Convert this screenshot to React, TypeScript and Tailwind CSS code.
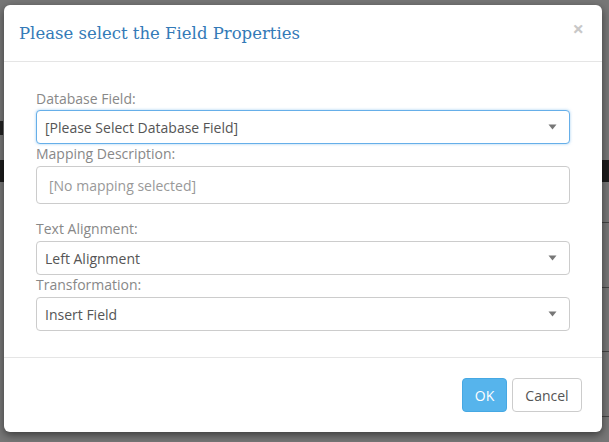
import React from "react";

function Caret() {
  return (
    <svg width="9" height="6" viewBox="0 0 9 6" className="shrink-0">
      <path d="M0.5 0.5 L8.5 0.5 L4.5 5.5 Z" fill="#777" />
    </svg>
  );
}

function SelectBox({ text, focused }: { text: string; focused?: boolean }) {
  return (
    <div
      className={
        "flex h-[34px] items-center justify-between rounded-[4px] border bg-white pl-[8px] pr-[12px] text-[14px] text-[#555] " +
        (focused
          ? "border-[#66afe9] shadow-[0_0_3px_rgba(102,175,233,0.6)]"
          : "border-[#ccc]")
      }
    >
      <span>{text}</span>
      <Caret />
    </div>
  );
}

function Label({ children }: { children: React.ReactNode }) {
  return <div className="h-[20px] leading-[20px] text-[14px] text-[#888]">{children}</div>;
}

export default function App() {
  return (
    <div
      className="relative h-[442px] w-[609px] overflow-hidden bg-[#777]"
      style={{ fontFamily: '"Open Sans", "Noto Sans", sans-serif' }}
    >
      {/* background page bits peeking out */}
      <div className="absolute left-0 top-[121px] h-[14px] w-[3px] bg-[#222]" />
      <div className="absolute left-0 top-[160px] h-[22px] w-[4px] bg-[#1c1c1c]" />
      <div className="absolute right-0 top-[160px] h-[22px] w-[8px] bg-[#1c1c1c]" />
      <div className="absolute right-0 top-[222px] h-px w-[8px] bg-[#444]" />
      <div className="absolute right-0 top-[287px] h-px w-[8px] bg-[#444]" />
      <div className="absolute right-0 top-[351px] h-px w-[8px] bg-[#444]" />
      <div className="absolute right-0 top-[416px] h-px w-[8px] bg-[#444]" />

      <div className="absolute left-[4px] top-[5px] flex h-[427px] w-[598px] flex-col rounded-[6px] bg-white shadow-[0_3px_9px_rgba(0,0,0,0.5)]">
        {/* header */}
        <div className="flex h-[57px] items-start justify-between border-b border-[#e5e5e5] pl-[15px] pr-[18px]">
          <div
            className="pt-[17px] text-[16.5px] leading-[24px] text-[#337ab7]"
            style={{ fontFamily: '"DejaVu Serif", "Liberation Serif", serif' }}
          >
            Please select the Field Properties
          </div>
          <div className="pt-[14px] text-[20px] font-bold leading-[20px] text-[#c8c8c8]">×</div>
        </div>

        {/* body */}
        <div className="flex flex-col px-[32px] pb-[26px] pt-[27px]">
          <Label>Database Field:</Label>
          <div className="mt-[1px]">
            <SelectBox text="[Please Select Database Field]" focused />
          </div>
          <Label>Mapping Description:</Label>
          <div className="mt-[2px] flex h-[38px] items-center rounded-[4px] border border-[#ccc] bg-white pl-[12px] text-[14px] text-[#999]">
            [No mapping selected]
          </div>
          <div className="mt-[15px]">
            <Label>Text Alignment:</Label>
          </div>
          <div className="mt-[2px]">
            <SelectBox text="Left Alignment" />
          </div>
          <Label>Transformation:</Label>
          <div className="mt-[2px]">
            <SelectBox text="Insert Field" />
          </div>
        </div>

        {/* footer */}
        <div className="flex flex-1 items-start justify-end gap-[5px] border-t border-[#e5e5e5] pr-[20px] pt-[20px]">
          <button className="h-[34px] w-[45px] rounded-[4px] border border-[#46a8e3] bg-[#56b4ec] text-[14px] text-white">
            OK
          </button>
          <button className="h-[34px] w-[70px] rounded-[4px] border border-[#ccc] bg-white text-[14px] text-[#555]">
            Cancel
          </button>
        </div>
      </div>
    </div>
  );
}
